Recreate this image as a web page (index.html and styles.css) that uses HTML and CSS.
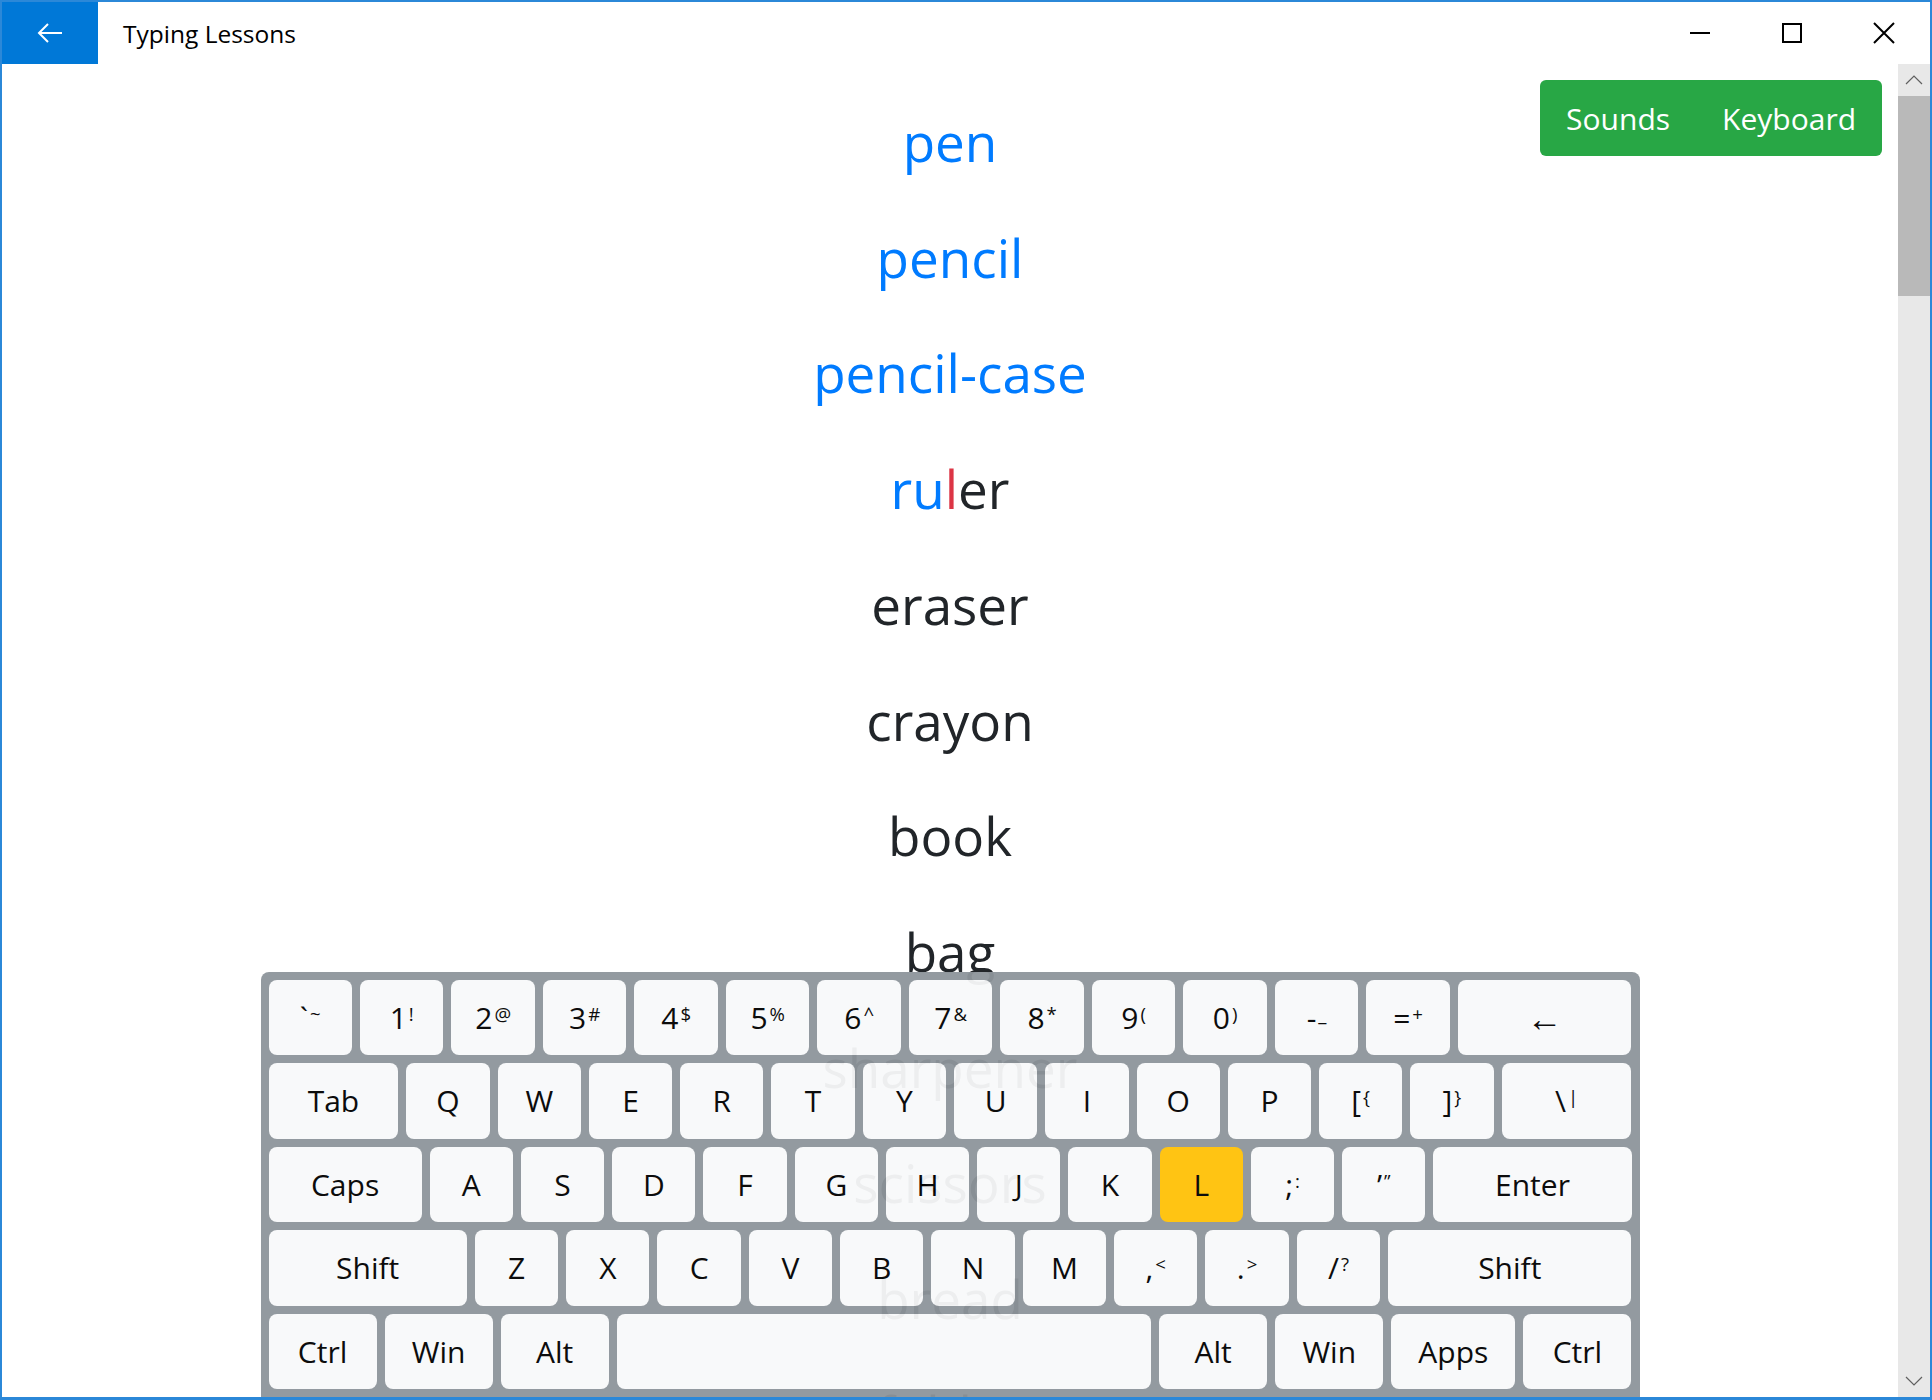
FILE: index.html
```html
<!DOCTYPE html>
<html lang="en">
<head>
    <meta charset="UTF-8">
    <meta name="viewport" content="width=device-width, initial-scale=1.0">
    <title>Typing Lessons</title>
    <link rel="stylesheet" href="styles.css">
</head>
<body>
<div class="window">
    <header class="titlebar">
        <div class="back">
            <svg width="26" height="22" viewBox="0 0 26 22"><path d="M25 11H2M11 2L2 11l9 9" fill="none" stroke="#fff" stroke-width="2"/></svg>
        </div>
        <div class="title">Typing Lessons</div>
        <div class="controls">
            <span><svg width="22" height="22" viewBox="0 0 22 22"><path d="M1 11h20" stroke="#000" stroke-width="2"/></svg></span>
            <span><svg width="22" height="22" viewBox="0 0 22 22"><rect x="2" y="2" width="18" height="18" fill="none" stroke="#000" stroke-width="2"/></svg></span>
            <span><svg width="22" height="22" viewBox="0 0 22 22"><path d="M1 1l20 20M21 1L1 21" stroke="#000" stroke-width="2"/></svg></span>
        </div>
    </header>
    <div class="frame">
        <main class="content">
            <div class="toolbar">
                <button class="btn">Sounds</button>
                <button class="btn">Keyboard</button>
            </div>

            <div class="words">
                <div class="word done">pen</div>
                <div class="word done">pencil</div>
                <div class="word done">pencil-case</div>
                <div class="word"><span class="done">ru</span><span class="wrong">l</span>er</div>
                <div class="word">eraser</div>
                <div class="word">crayon</div>
                <div class="word">book</div>
                <div class="word">bag</div>
                <div class="word">sharpener</div>
                <div class="word">scissors</div>
                <div class="word">bread</div>
                <div class="word">folder</div>
            </div>

            <div class="keyboard">
                <div class="row">
                    <div class="key">`<sup>~</sup></div>
                    <div class="key">1<sup>!</sup></div>
                    <div class="key">2<sup>@</sup></div>
                    <div class="key">3<sup>#</sup></div>
                    <div class="key">4<sup>$</sup></div>
                    <div class="key">5<sup>%</sup></div>
                    <div class="key">6<sup>^</sup></div>
                    <div class="key">7<sup>&amp;</sup></div>
                    <div class="key">8<sup>*</sup></div>
                    <div class="key">9<sup>(</sup></div>
                    <div class="key">0<sup>)</sup></div>
                    <div class="key">-<sup>_</sup></div>
                    <div class="key">=<sup>+</sup></div>
                    <div class="key k-back">&larr;</div>
                </div>
                <div class="row">
                    <div class="key k-tab">Tab</div>
                    <div class="key">Q</div>
                    <div class="key">W</div>
                    <div class="key">E</div>
                    <div class="key">R</div>
                    <div class="key">T</div>
                    <div class="key">Y</div>
                    <div class="key">U</div>
                    <div class="key">I</div>
                    <div class="key">O</div>
                    <div class="key">P</div>
                    <div class="key">[<sup>{</sup></div>
                    <div class="key">]<sup>}</sup></div>
                    <div class="key k-tab">\<sup>|</sup></div>
                </div>
                <div class="row">
                    <div class="key k-caps">Caps</div>
                    <div class="key">A</div>
                    <div class="key">S</div>
                    <div class="key">D</div>
                    <div class="key">F</div>
                    <div class="key">G</div>
                    <div class="key">H</div>
                    <div class="key">J</div>
                    <div class="key">K</div>
                    <div class="key active">L</div>
                    <div class="key">;<sup>:</sup></div>
                    <div class="key">&#8217;<sup>&#8221;</sup></div>
                    <div class="key k-enter">Enter</div>
                </div>
                <div class="row">
                    <div class="key k-shift">Shift</div>
                    <div class="key">Z</div>
                    <div class="key">X</div>
                    <div class="key">C</div>
                    <div class="key">V</div>
                    <div class="key">B</div>
                    <div class="key">N</div>
                    <div class="key">M</div>
                    <div class="key">,<sup>&lt;</sup></div>
                    <div class="key">.<sup>&gt;</sup></div>
                    <div class="key">/<sup>?</sup></div>
                    <div class="key k-rshift">Shift</div>
                </div>
                <div class="row">
                    <div class="key k-mod">Ctrl</div>
                    <div class="key k-mod">Win</div>
                    <div class="key k-mod">Alt</div>
                    <div class="key k-space"></div>
                    <div class="key k-mod">Alt</div>
                    <div class="key k-mod">Win</div>
                    <div class="key k-apps">Apps</div>
                    <div class="key k-mod">Ctrl</div>
                </div>
            </div>
        </main>
        <div class="scrollbar">
            <div class="arrow"><svg width="18" height="10" viewBox="0 0 18 10"><path d="M1 9l8-8 8 8" fill="none" stroke="#606060" stroke-width="1.2"/></svg></div>
            <div class="thumb"></div>
            <div class="track"></div>
            <div class="arrow"><svg width="18" height="10" viewBox="0 0 18 10"><path d="M1 1l8 8 8-8" fill="none" stroke="#606060" stroke-width="1.2"/></svg></div>
        </div>
    </div>
</div>
</body>
</html>
```
FILE: styles.css
```css
*{
    margin:0;
    padding:0;
    box-sizing:border-box;
}
body {
    font-family:"Open Sans","Noto Sans",sans-serif;
    background:#fff;
    color:#212529;
}
.window {
    height:1400px;
    border:2px solid #2b88d8;
    border-bottom-width:3px;
    display:flex;
    flex-direction:column;
}
/* title bar */
.titlebar {
    height:62px;
    display:flex;
    align-items:center;
}
.back {
    width:96px;
    height:62px;
    background:#0078d7;
    display:flex;
    align-items:center;
    justify-content:center;
}
.title {
    margin-left:25px;
    font-size:24.5px;
    color:#000;
}
.controls {
    margin-left:auto;
    display:flex;
}
.controls span {
    width:92px;
    height:62px;
    display:flex;
    align-items:center;
    justify-content:center;
}
/* page */
.frame {
    flex:1;
    display:flex;
    min-height:0;
}
.content {
    flex:1;
    position:relative;
    overflow:hidden;
}
.toolbar {
    position:absolute;
    top:16px;
    right:16px;
    display:flex;
    background:#28a745;
    border-radius:6px;
    z-index:2;
}
.btn {
    height:76px;
    padding:0 26px;
    border:0;
    background:transparent;
    color:#fff;
    font-family:inherit;
    font-size:30px;
}
.words {
    padding-top:20px;
    text-align:center;
}
.word {
    font-size:53px;
    line-height:115.7px;
    color:#212529;
}
.done {
    color:#007bff;
}
.wrong {
    color:#dc3545;
}
/* keyboard */
.keyboard {
    position:absolute;
    left:0;
    right:0;
    bottom:0;
    width:1379px;
    margin:0 auto;
    padding:8px;
    display:flex;
    flex-direction:column;
    gap:8px;
    background:#8e959b;
    border-radius:8px 8px 0 0;
    opacity:0.95;
    z-index:1;
}
.row {
    display:flex;
    gap:8px;
}
.key {
    flex:1 1 0;
    height:75.4px;
    line-height:75.4px;
    background:#f8f9fa;
    border-radius:8px;
    text-align:center;
    font-size:30px;
    color:#000;
    white-space:nowrap;
}
.key sup {
    font-size:62%;
    vertical-align:8px;
    margin-left:2px;
    line-height:1;
}
.key.active {
    background:#ffc107;
}
.k-back { flex-grow:2.08; font-size:36px; }
.k-tab { flex-grow:1.56; }
.k-caps { flex-grow:1.84; }
.k-enter { flex-grow:2.38; }
.k-shift { flex-grow:2.38; }
.k-rshift { flex-grow:2.92; }
.k-mod { flex-grow:108; }
.k-apps { flex-grow:124; }
.k-space { flex-grow:534; }
/* scrollbar */
.scrollbar {
    width:32px;
    background:#e8e8e8;
    display:flex;
    flex-direction:column;
}
.arrow {
    height:32px;
    display:flex;
    align-items:center;
    justify-content:center;
}
.thumb {
    height:200px;
    background:#b9b9b9;
}
.track {
    flex:1;
}
```
